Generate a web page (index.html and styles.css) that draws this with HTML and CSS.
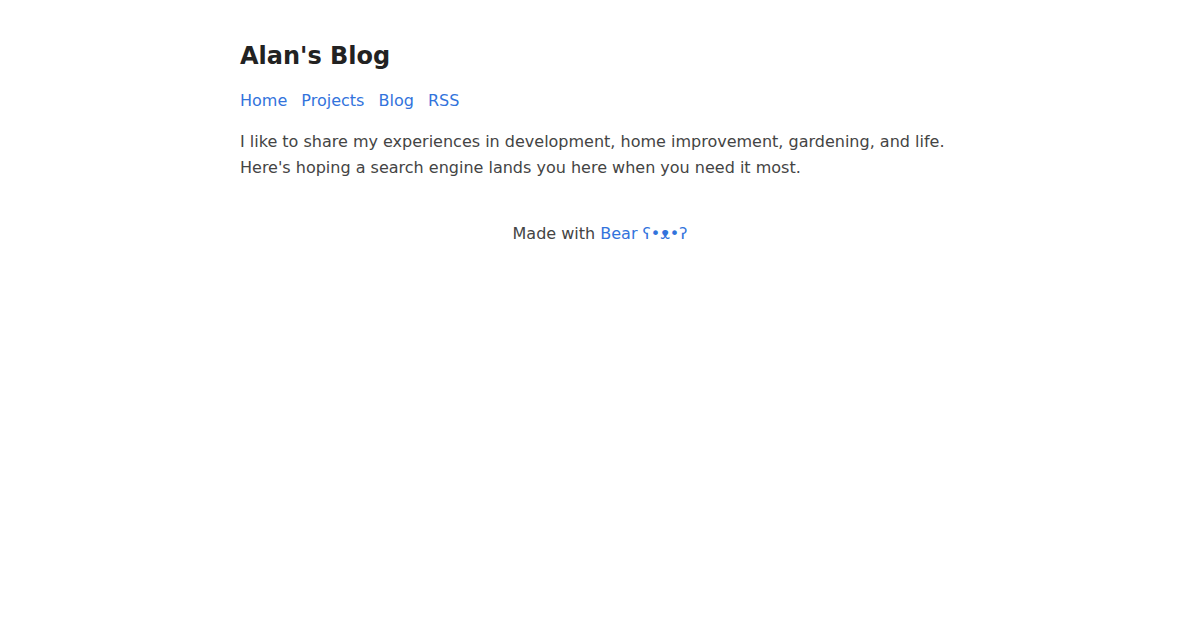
FILE: index.html
```html
<!DOCTYPE html>
<html lang="en">

<head>
    <meta charset="UTF-8">
    <meta name="viewport" content="width=device-width, initial-scale=1.0">
    <title>Alan's Blog</title>
    <link rel="stylesheet" href="styles.css">
</head>

<body>
    <header>
        <a href="/" class="title">
            <h1>Alan's Blog</h1>
        </a>
        <nav>
            <p>
                <a href="/">Home</a>
                <a href="/projects/">Projects</a>
                <a href="/blog/">Blog</a>
                <a href="/feed/">RSS</a>
            </p>
        </nav>
    </header>
    <main>
        <p>I like to share my experiences in development, home improvement, gardening, and life.
            Here's hoping a search engine lands you here when you need it most.</p>
    </main>
    <footer>
        Made with <a href="https://bearblog.dev">Bear ʕ•ᴥ•ʔ</a>
    </footer>
</body>

</html>
```

FILE: styles.css
```css
body {
    font-family: "DejaVu Sans", Verdana, sans-serif;
    font-size: 16px;
    margin: auto;
    padding: 20px;
    max-width: 720px;
    text-align: left;
    background-color: #fff;
    line-height: 26px;
    color: #444;
}

h1 {
    color: #222;
    font-size: 24px;
    margin: 23px 0 19px;
}

a {
    color: #3273dc;
    text-decoration: none;
}

.title {
    text-decoration: none;
}

nav p {
    margin: 0;
}

nav a {
    margin-right: 9px;
}

main p {
    margin: 15px 0;
}

footer {
    padding: 25px;
    text-align: center;
}
```
